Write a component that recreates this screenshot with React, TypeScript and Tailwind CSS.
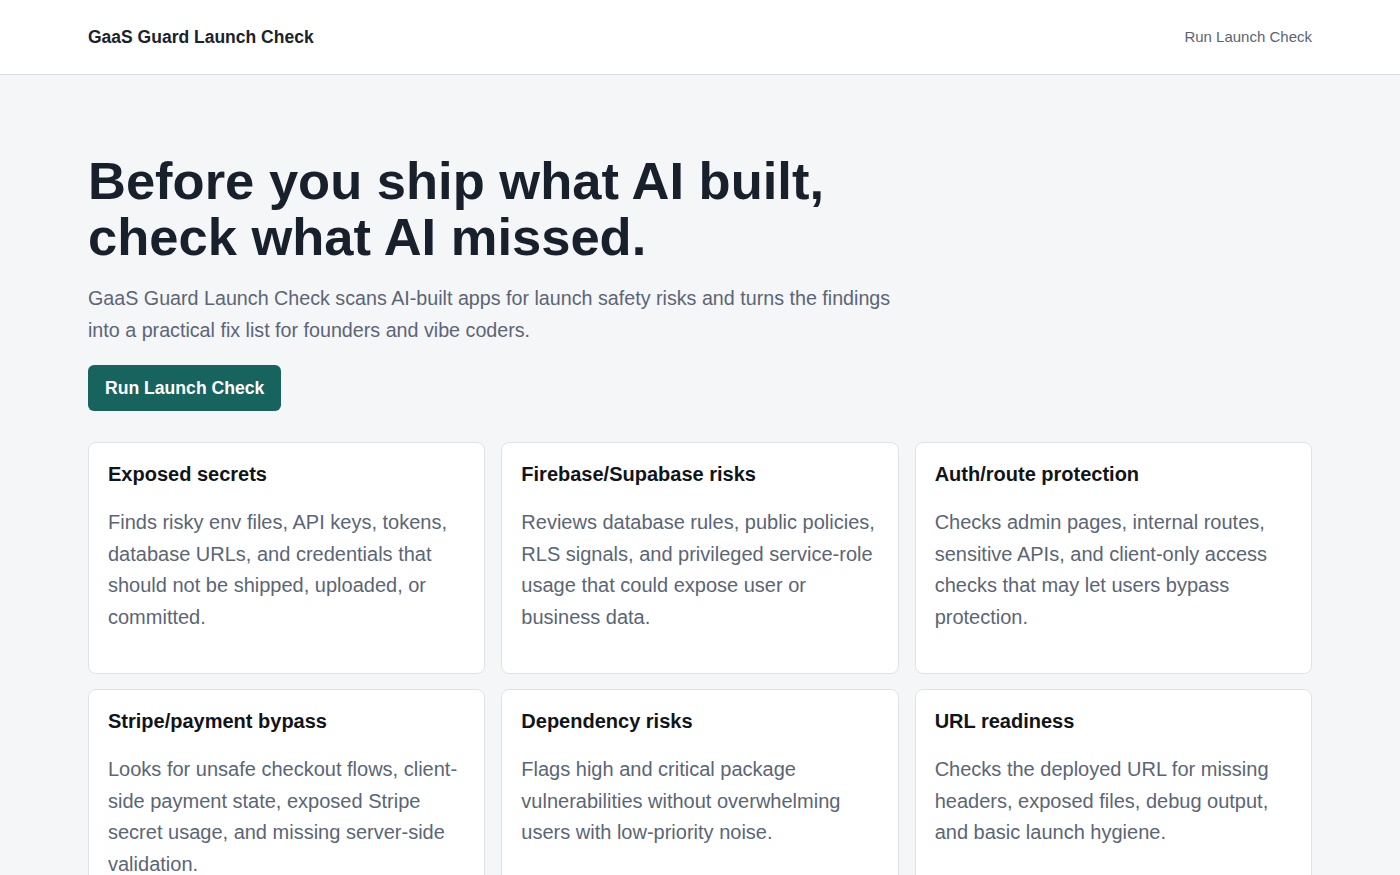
const checks = [
  {
    title: "Exposed secrets",
    body: "Finds risky env files, API keys, tokens, database URLs, and credentials that should not be shipped, uploaded, or committed.",
  },
  {
    title: "Firebase/Supabase risks",
    body: "Reviews database rules, public policies, RLS signals, and privileged service-role usage that could expose user or business data.",
  },
  {
    title: "Auth/route protection",
    body: "Checks admin pages, internal routes, sensitive APIs, and client-only access checks that may let users bypass protection.",
  },
  {
    title: "Stripe/payment bypass",
    body: "Looks for unsafe checkout flows, client-side payment state, exposed Stripe secret usage, and missing server-side validation.",
  },
  {
    title: "Dependency risks",
    body: "Flags high and critical package vulnerabilities without overwhelming users with low-priority noise.",
  },
  {
    title: "URL readiness",
    body: "Checks the deployed URL for missing headers, exposed files, debug output, and basic launch hygiene.",
  },
];

function App() {
  return (
    <div className="min-h-screen bg-[#f5f6f8] font-['Liberation_Sans',Arial,sans-serif]">
      <header className="h-[75px] border-b border-[#dde1e6] bg-white">
        <div className="mx-auto flex h-full w-[1224px] items-center justify-between">
          <span className="text-[17.5px] font-bold text-[#1b222c]">
            GaaS Guard Launch Check
          </span>
          <a href="#" className="text-[15px] text-[#5b6472]">
            Run Launch Check
          </a>
        </div>
      </header>

      <main className="mx-auto w-[1224px] pt-[78px] pb-10">
        <div className="max-w-[820px]">
          <h1 className="text-[52.5px] leading-[56px] font-bold text-[#18202b]">
            Before you ship what AI built, check what AI missed.
          </h1>
          <p className="mt-[17px] text-[19.7px] leading-[32px] text-[#5b6576]">
            GaaS Guard Launch Check scans AI-built apps for launch safety risks
            and turns the findings into a practical fix list for founders and
            vibe coders.
          </p>
        </div>
        <button className="mt-[19px] h-[46px] rounded-md bg-[#17645e] px-[17px] text-[17.6px] font-bold text-white">
          Run Launch Check
        </button>

        <div className="mt-[31px] grid grid-cols-3 gap-x-4 gap-y-[15px]">
          {checks.map((c) => (
            <div
              key={c.title}
              className="rounded-lg border border-[#dfe3e8] bg-white px-[19px] pt-[19px] pb-[40px]"
            >
              <h2 className="text-[20px] leading-[24px] font-bold text-[#111418]">
                {c.title}
              </h2>
              <p className="mt-[21px] text-[20px] leading-[31.5px] text-[#5b6576]">
                {c.body}
              </p>
            </div>
          ))}
        </div>
      </main>
    </div>
  );
}

export default App;
